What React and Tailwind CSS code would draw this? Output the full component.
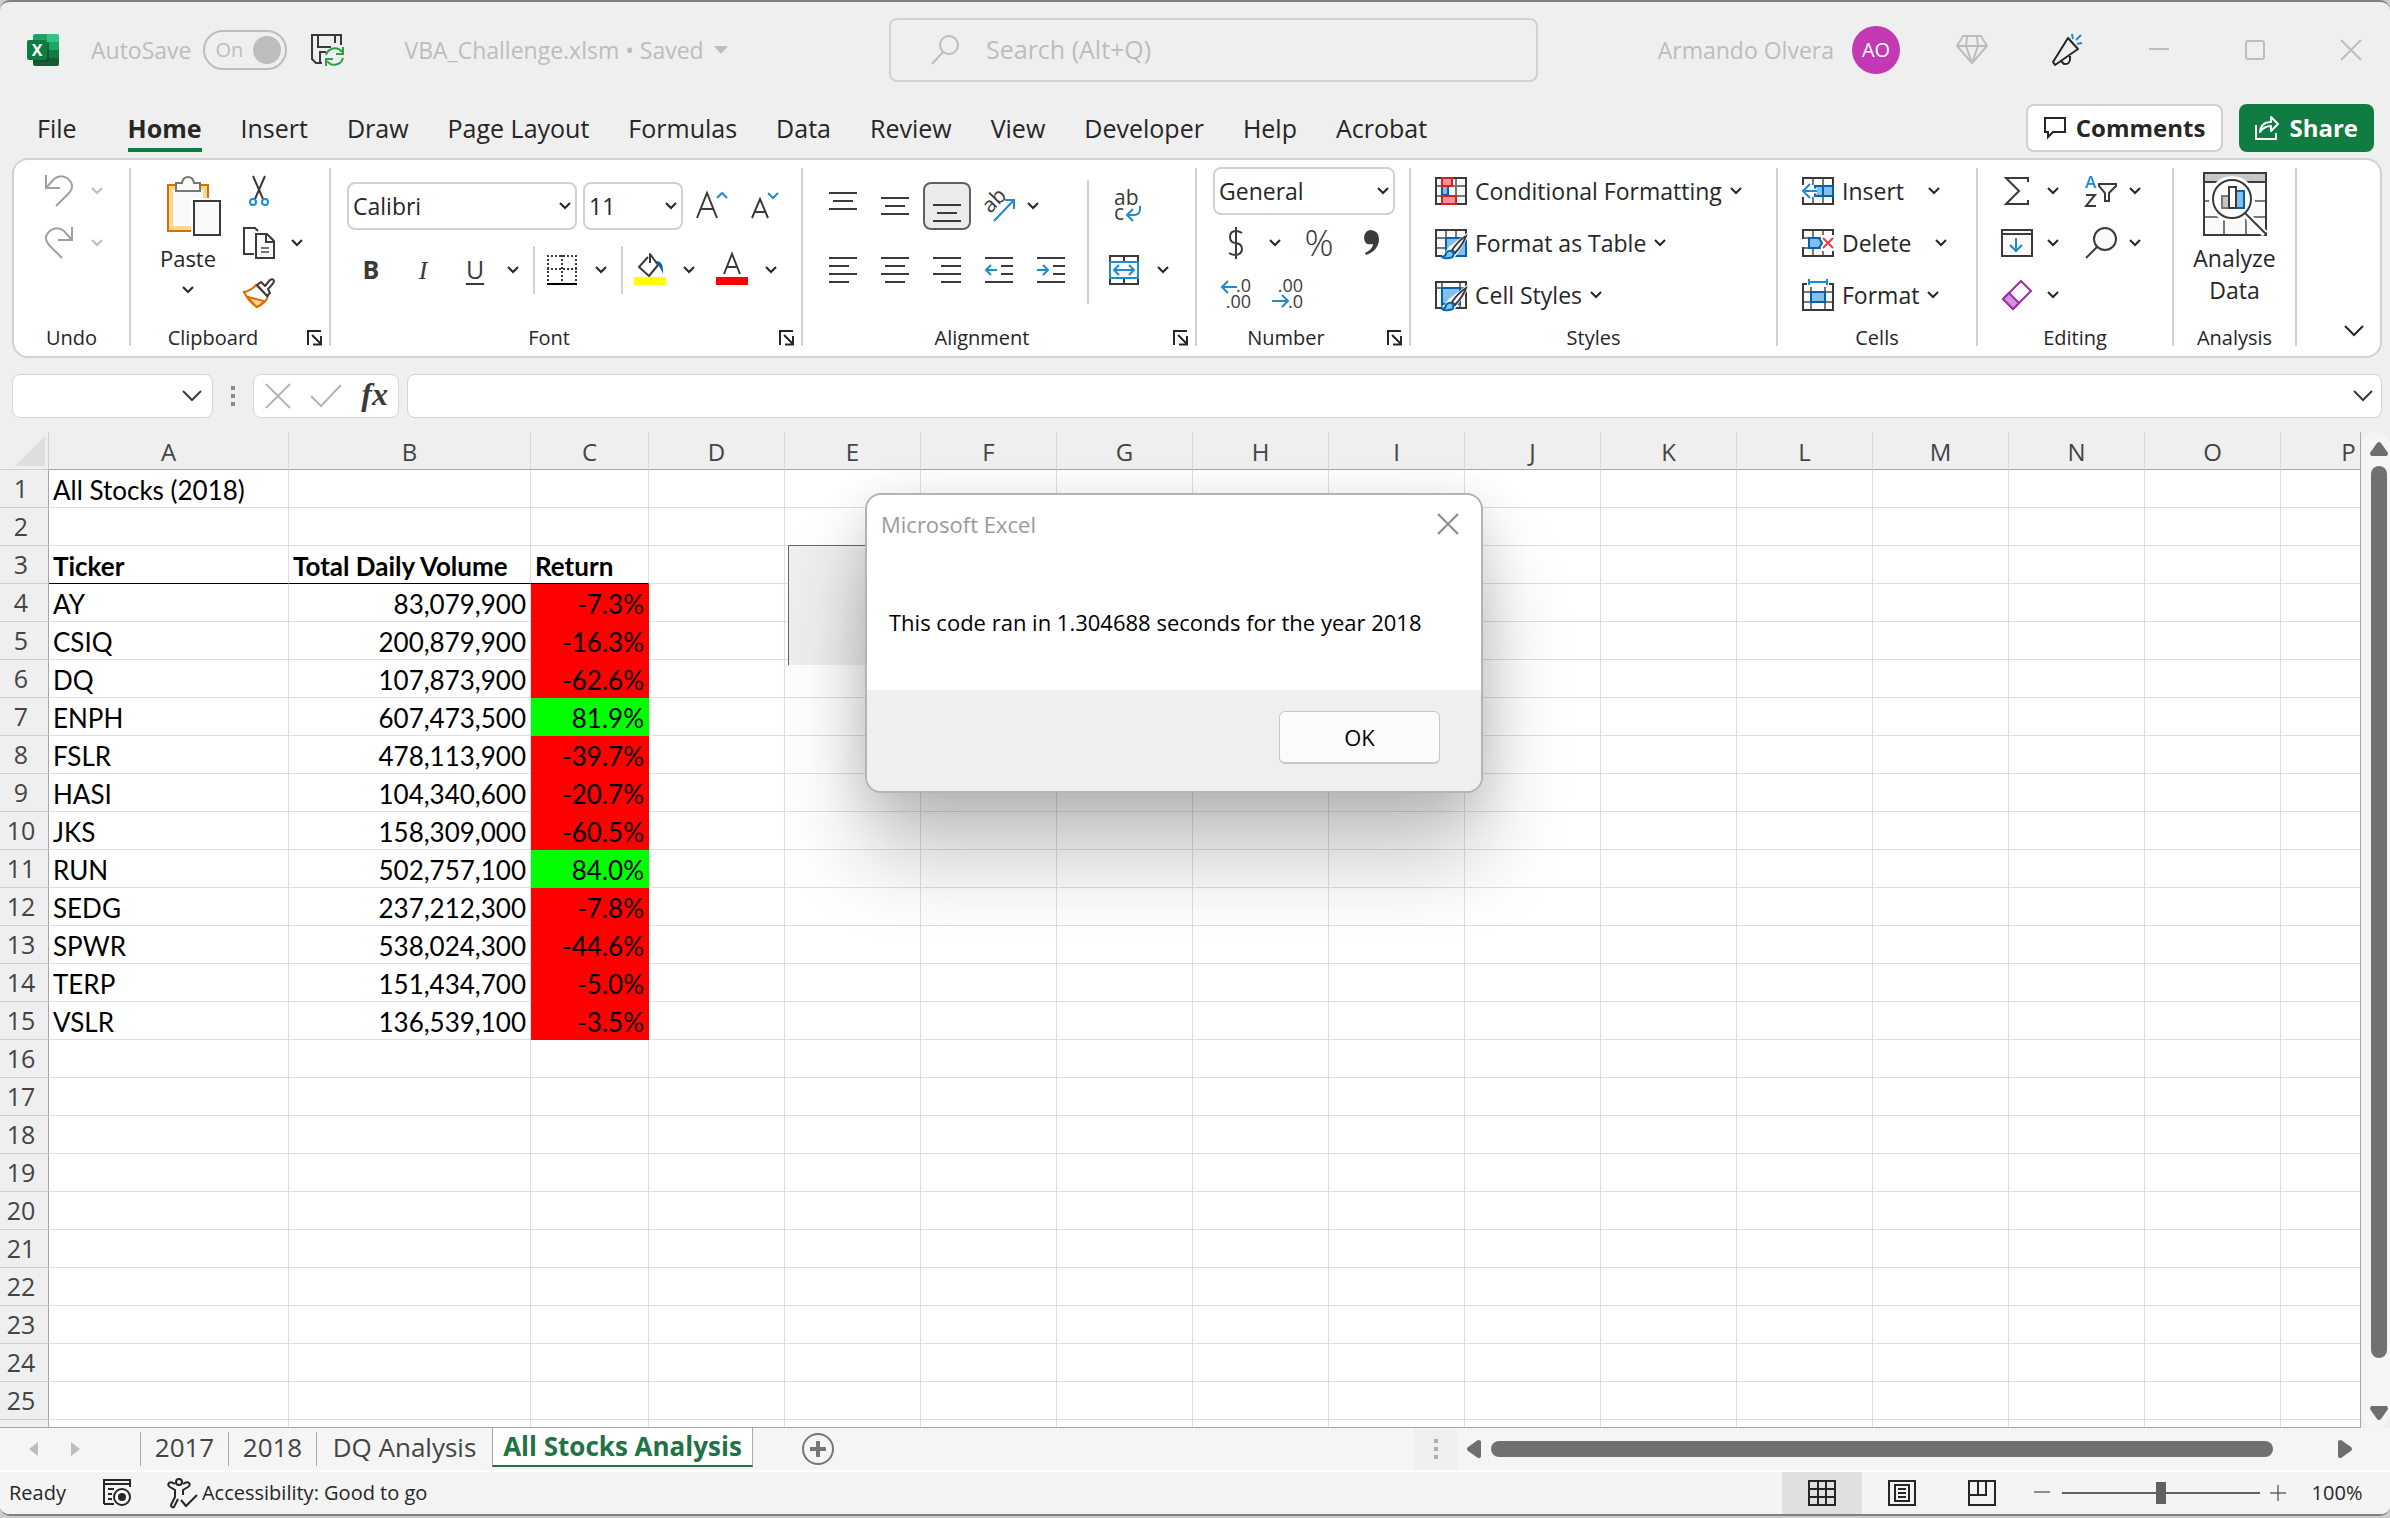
import React from "react";

const tabs = ["File", "Home", "Insert", "Draw", "Page Layout", "Formulas", "Data", "Review", "View", "Developer", "Help", "Acrobat"];

const columns = ["A", "B", "C", "D", "E", "F", "G", "H", "I", "J", "K", "L", "M", "N", "O", "P"];

const stocks = [
  ["AY", "83,079,900", "-7.3%"],
  ["CSIQ", "200,879,900", "-16.3%"],
  ["DQ", "107,873,900", "-62.6%"],
  ["ENPH", "607,473,500", "81.9%"],
  ["FSLR", "478,113,900", "-39.7%"],
  ["HASI", "104,340,600", "-20.7%"],
  ["JKS", "158,309,000", "-60.5%"],
  ["RUN", "502,757,100", "84.0%"],
  ["SEDG", "237,212,300", "-7.8%"],
  ["SPWR", "538,024,300", "-44.6%"],
  ["TERP", "151,434,700", "-5.0%"],
  ["VSLR", "136,539,100", "-3.5%"],
];

const INK = "#3b3a39";
const BLUE = "#1e8bcd";

function Chevron({ color = "#262626", wide = false }) {
  return wide ? (
    <svg width="20" height="12" viewBox="0 0 20 12" fill="none" stroke={color} strokeWidth="2">
      <path d="M1 1l9 9 9-9" />
    </svg>
  ) : (
    <svg width="12" height="8" viewBox="0 0 12 8" fill="none" stroke={color} strokeWidth="2" className="shrink-0">
      <path d="M1 1l5 5 5-5" />
    </svg>
  );
}

function Tool({ label, className = "w-[52px]", children, pressed }) {
  return (
    <button type="button" aria-label={label} aria-pressed={pressed} className={`flex h-12 shrink-0 items-center justify-center ${className}`}>
      {children}
    </button>
  );
}

function Icon({ w = 32, h = 32, className = "", children }) {
  return (
    <svg width={w} height={h} viewBox={`0 0 ${w} ${h}`} fill="none" className={`shrink-0 overflow-visible ${className}`}>
      {children}
    </svg>
  );
}

function Launcher({ label }) {
  return (
    <button type="button" aria-label={label} className="mr-1.5 flex w-7 items-center justify-end">
      <Icon w={16} h={16}>
        <path d="M1 15V1h13M5 5l9 9M14 6v8.500H6" stroke="#262626" strokeWidth="2" />
      </Icon>
    </button>
  );
}

function Group({ title, launcher, className, children }) {
  return (
    <>
      <section aria-label={title} className={`flex shrink-0 flex-col ${className}`}>
        <div className="flex-1">{children}</div>
        <div className="flex h-[34px] items-center pb-0.5">
          <span className="flex-1 text-center text-[20px] leading-none text-[#262626]">{title}</span>
          {launcher && <Launcher label={`${title} settings`} />}
        </div>
      </section>
      <div className="mt-2 mb-2.5 w-0.5 shrink-0 bg-[#d1d1d1]" />
    </>
  );
}

function Combo({ label, value, className }) {
  return (
    <div className={`relative shrink-0 ${className}`}>
      <select aria-label={label} className="h-12 w-full appearance-none rounded-lg border-2 border-[#d1d1d1] bg-white pl-1 text-[23px] text-[#262626]">
        <option>{value}</option>
      </select>
      <span className="pointer-events-none absolute inset-y-0 right-1.5 flex items-center">
        <Chevron />
      </span>
    </div>
  );
}

function Lines({ rows }) {
  return (
    <>
      {rows.map(([x1, x2, y]) => (
        <path key={y} d={`M${x1} ${y}H${x2}`} stroke={INK} strokeWidth="2" />
      ))}
    </>
  );
}

function ExcelLogo() {
  return (
    <Icon>
      <path d="M6 2q0-2 2-2h12v8H6z" fill="#21a366" />
      <path d="M20 0h10q2 0 2 2v6H20z" fill="#33c481" />
      <path d="M6 8h14v8H6z" fill="#107c41" />
      <path d="M20 8h12v8H20z" fill="#21a366" />
      <path d="M6 16h14v8H6z" fill="#185c37" />
      <path d="M20 16h12v8H20z" fill="#107c41" />
      <path d="M6 24h26v6q0 2-2 2H8q-2 0-2-2z" fill="#185c37" />
      <path d="M6 8h14q2 0 2 2v16q0 2-2 2H6z" fill="#0b4426" opacity=".6" />
      <rect y="6" width="20" height="20" rx="2" fill="#107c41" />
      <text x="10" y="22" textAnchor="middle" fontSize="16" fontWeight="700" fill="#fff" fontFamily="Open Sans">X</text>
    </Icon>
  );
}

function SaveIcon() {
  return (
    <Icon w={34} h={34}>
      <path d="M30 12V2H1v24l4 4h6" stroke={INK} strokeWidth="2" />
      <path d="M7 2v12h13M24 2v8M9 29V19h6" stroke={INK} strokeWidth="2" />
      <path d="M15 22a9 9 0 0 1 16-3M32 14v7h-7M32 25a9 9 0 0 1-16 3M15 33v-7h7" stroke="#2f9e44" strokeWidth="2" />
    </Icon>
  );
}

function TitleBar() {
  return (
    <header className="flex h-24 shrink-0 items-center text-[#bdbdbd]">
      <div className="flex w-[889px] shrink-0 items-center pl-[27px]">
        <ExcelLogo />
        <label className="ml-8 flex items-center gap-3 text-[23px]">
          AutoSave
          <input type="checkbox" role="switch" defaultChecked className="peer sr-only" />
          <span className="flex h-10 w-[84px] items-center justify-between rounded-full border-2 border-[#bdbdbd] pr-1 pl-2.5 text-[20px]">
            On
            <span className="h-7 w-7 rounded-full bg-[#bdbdbd]" />
          </span>
        </label>
        <button type="button" aria-label="Save" className="ml-6">
          <SaveIcon />
        </button>
        <button type="button" className="ml-[59px] flex items-center gap-2.5 text-[23px]">
          VBA_Challenge.xlsm • Saved
          <svg width="14" height="8" viewBox="0 0 14 8" fill="#bdbdbd">
            <path d="M0 0h14L7 8z" />
          </svg>
        </button>
      </div>
      <label className="flex h-16 min-w-0 flex-1 items-center rounded-lg border-2 border-[#d2d2d2] pl-10">
        <Icon w={28} h={30}>
          <circle cx="18" cy="10" r="9" stroke="#bdbdbd" strokeWidth="2" />
          <path d="M12 17L1 29" stroke="#bdbdbd" strokeWidth="2" />
        </Icon>
        <input type="search" aria-label="Search" placeholder="Search (Alt+Q)" className="ml-[27px] min-w-0 flex-1 bg-transparent text-[25px] outline-none placeholder:text-[#bdbdbd]" />
      </label>
      <div className="ml-[120px] flex shrink-0 items-center pr-[29px]">
        <span className="text-[23px]">Armando Olvera</span>
        <span className="ml-4.5 flex h-12 w-12 items-center justify-center rounded-full bg-[#c239b3] text-[20px] text-white">AO</span>
        <button type="button" aria-label="Premium" className="ml-14">
          <Icon h={30}>
            <path d="M7 1h18l6 10-15 17L1 11zM1 11h30M11 1l-1 10 6 17 6-17-1-10" stroke="#bdbdbd" strokeWidth="2" strokeLinejoin="round" />
          </Icon>
        </button>
        <button type="button" aria-label="What's new" className="ml-[62px]">
          <Icon h={34}>
            <path d="M18 5L3 29l2 3 23-16z" stroke="#262626" strokeWidth="2" strokeLinejoin="round" />
            <path d="M11 28l3 3q7 1 6-8" stroke="#262626" strokeWidth="2" />
            <path d="M22 1l1 5M31 2l-5 5M27 11l5-1" stroke={BLUE} strokeWidth="2" />
          </Icon>
        </button>
        <button type="button" aria-label="Minimize" className="ml-[67px]">
          <Icon w={20} h={20}><path d="M0 9h20" stroke="#bdbdbd" strokeWidth="2" /></Icon>
        </button>
        <button type="button" aria-label="Maximize" className="ml-[76px]">
          <Icon w={20} h={20}><rect x="1" y="1" width="18" height="18" rx="2" stroke="#bdbdbd" strokeWidth="2" /></Icon>
        </button>
        <button type="button" aria-label="Close" className="ml-[76px]">
          <Icon w={20} h={20}><path d="M0 0l20 20M20 0L0 20" stroke="#bdbdbd" strokeWidth="2" /></Icon>
        </button>
      </div>
    </header>
  );
}

function TabRow() {
  return (
    <nav className="flex h-[60px] shrink-0 items-start pt-1.5 pr-4 pl-[37px]">
      <div className="flex flex-1 gap-[39px]">
        {tabs.map((tab) =>
          tab === "Home" ? (
            <button key={tab} type="button" className="ml-3 h-12 border-b-4 border-[#107c41] pt-1.5 text-[25px] font-bold text-[#262626]">{tab}</button>
          ) : (
            <button key={tab} type="button" className="h-12 pt-1.5 pb-1 text-[25px] text-[#262626]">{tab}</button>
          )
        )}
      </div>
      <button type="button" className="flex h-12 items-center gap-2.5 rounded-lg border-2 border-[#d1d1d1] bg-white px-4 text-[24px] font-bold text-[#262626]">
        <Icon w={22} h={22}>
          <path d="M1 1h20v14H9l-5 5v-5H1z" stroke="#262626" strokeWidth="2" />
        </Icon>
        Comments
      </button>
      <button type="button" className="ml-4 flex h-12 items-center gap-2.5 rounded-lg bg-[#107c41] px-4 text-[24px] font-bold text-white">
        <Icon w={24} h={24}>
          <path d="M1 9v14h20v-6" stroke="#fff" strokeWidth="2" />
          <path d="M5 16q1-10 11-10V1l7 7-7 7v-5q-7 0-11 6z" stroke="#fff" strokeWidth="2" strokeLinejoin="round" />
        </Icon>
        Share
      </button>
    </nav>
  );
}

function UndoIcon() {
  return (
    <Icon w={30} h={34}>
      <path d="M2 1v13h14M2 14L10 5q6-5 13-1 9 7 2 15L12 32" stroke="#a0a0a0" strokeWidth="2" />
    </Icon>
  );
}

function RedoIcon() {
  return (
    <Icon w={30} h={34}>
      <path d="M28 1v13H14M28 14L20 5q-6-5-13-1-9 7-2 15l13 13" stroke="#a0a0a0" strokeWidth="2" />
    </Icon>
  );
}

function PasteIcon() {
  return (
    <Icon w={54} h={60} className="ml-3">
      <path d="M1 9h40v46H1z" fill="#fafafa" stroke="#e06c00" strokeWidth="2" />
      <path d="M4 12h34v40H4z" stroke="#f9d98f" strokeWidth="4" />
      <path d="M9 15V7h6q1-6 6-6t6 6h6v8z" fill="#fafafa" stroke="#797774" strokeWidth="2" />
      <path d="M24 22h30v38H24z" fill="#fff" />
      <path d="M27 25h26v34H27z" fill="#fafafa" stroke={INK} strokeWidth="2" />
    </Icon>
  );
}

function CutIcon() {
  return (
    <Icon w={20} h={32}>
      <path d="M4 1l10 23M16 1L6 24" stroke={INK} strokeWidth="2" />
      <circle cx="4" cy="27" r="3" stroke={BLUE} strokeWidth="2" />
      <circle cx="16" cy="27" r="3" stroke={BLUE} strokeWidth="2" />
    </Icon>
  );
}

function CopyIcon() {
  return (
    <Icon>
      <path d="M15 4l-3-3H1v26h10" stroke={INK} strokeWidth="2" />
      <path d="M13 7h11l7 7v17H13z" fill="#fafafa" stroke={INK} strokeWidth="2" />
      <path d="M23 7v8h8" stroke={INK} strokeWidth="2" />
      <path d="M18 21h8M18 25h8" stroke="#797774" strokeWidth="2" />
    </Icon>
  );
}

function PainterIcon() {
  return (
    <Icon h={30}>
      <path d="M13 7Q8 13 1 14q5 10 13 15 9-4 11-11z" fill="#fff" stroke="#e06c00" strokeWidth="2" />
      <path d="M5 19l16 4q-3 4-7 6-5-4-9-10z" fill="#f9d98f" stroke="#e06c00" strokeWidth="2" />
      <path d="M14 7l4-3 4 4 5-6q3-2 4 1 0 2-6 8l2 4-3 3z" fill="#fff" stroke={INK} strokeWidth="2" strokeLinejoin="round" />
    </Icon>
  );
}

function GridIcon({ children }) {
  return (
    <Icon>
      <path d="M1 3h30v26H1z" fill="#fafafa" />
      <path d="M11 3v26M21 3v26M1 11h30M1 21h30" stroke="#797774" strokeWidth="2" />
      <path d="M1 3h30v26H1z" stroke={INK} strokeWidth="2" />
      {children}
    </Icon>
  );
}

function BrushOverlay() {
  return (
    <>
      <path d="M32 6v6L20 30H6l8-10z" fill="#fff" />
      <path d="M31 9q-7 4-14 14l3 3Q29 16 31 9z" fill="#fff" stroke={INK} strokeWidth="2" />
      <path d="M7 30q4-1 4-4 3-4 7-1 2 6-4 6-4 1-7-1z" fill="#83beec" stroke="#0063b1" strokeWidth="2" />
    </>
  );
}

function ArrowPath({ d }) {
  return <path d={d} stroke={BLUE} strokeWidth="2" />;
}

function StyleItem({ icon, text, far }) {
  return (
    <button type="button" className="flex h-[52px] items-center text-[23px] text-[#262626]">
      {icon}
      <span className="mr-2 ml-2 whitespace-nowrap">{text}</span>
      <span className={far ? "ml-4" : ""}>
        <Chevron />
      </span>
    </button>
  );
}

function Ribbon() {
  const light = "#bdbdbd";
  return (
    <div className="mr-2 ml-3 flex h-[200px] shrink-0 overflow-hidden rounded-2xl border-2 border-[#d1d1d1] bg-white">
      <Group title="Undo" className="w-[115px] pt-[5px]">
        <div className="flex h-[52px] items-center pl-5">
          <Tool label="Undo" className="w-[50px]"><UndoIcon /></Tool>
          <Tool label="Undo list" className="w-[26px]"><Chevron color={light} /></Tool>
        </div>
        <div className="flex h-[52px] items-center pl-5">
          <Tool label="Redo" className="w-[50px]"><RedoIcon /></Tool>
          <Tool label="Redo list" className="w-[26px]"><Chevron color={light} /></Tool>
        </div>
      </Group>

      <Group title="Clipboard" launcher className="w-[198px] pt-[5px]">
        <div className="flex pl-[22px]">
          <button type="button" className="flex w-[70px] flex-col items-center pt-[11px] text-[22px] text-[#262626]">
            <PasteIcon />
            <span className="mt-1.5 mb-3 leading-8">Paste</span>
            <Chevron />
          </button>
          <div className="ml-3">
            <div className="flex h-[52px] items-center">
              <Tool label="Cut" className="w-12"><CutIcon /></Tool>
            </div>
            <div className="flex h-[52px] items-center">
              <Tool label="Copy" className="w-12"><CopyIcon /></Tool>
              <Tool label="Copy options" className="w-7"><Chevron /></Tool>
            </div>
            <div className="flex h-12 items-center">
              <Tool label="Format Painter" className="w-12"><PainterIcon /></Tool>
            </div>
          </div>
        </div>
      </Group>

      <Group title="Font" launcher className="w-[470px] pt-[14px]">
        <div className="flex h-16 items-center pl-4">
          <Combo label="Font name" value="Calibri" className="w-[230px]" />
          <Combo label="Font size" value="11" className="ml-1.5 w-[100px]" />
          <Tool label="Increase Font Size" className="ml-1 w-[50px]">
            <Icon w={32} h={32}>
              <path d="M1 28L11 3l10 25M5 19h12" stroke={INK} strokeWidth="2" />
              <path d="M21 8l5-5 5 5" stroke={BLUE} strokeWidth="2" />
            </Icon>
          </Tool>
          <Tool label="Decrease Font Size" className="w-14">
            <Icon w={28} h={32}>
              <path d="M1 28L9 9l8 19M4 22h10" stroke={INK} strokeWidth="2" />
              <path d="M17 3l5 5 5-5" stroke={BLUE} strokeWidth="2" />
            </Icon>
          </Tool>
        </div>
        <div className="flex h-16 items-center pl-[14px] text-[25px] text-[#3b3a39]">
          <Tool label="Bold"><b>B</b></Tool>
          <Tool label="Italic"><i className="font-['Liberation_Serif',serif] text-[26px]">I</i></Tool>
          <Tool label="Underline"><u className="underline-offset-4">U</u></Tool>
          <Tool label="Underline options" className="w-6"><Chevron /></Tool>
          <div className="mx-2 h-12 w-0.5 bg-[#d1d1d1]" />
          <Tool label="Borders" className="w-[38px]">
            <Icon w={30} h={30}>
              <path d="M1 0v28M29 0v28M15 0v28M0 1h30M0 14h30" stroke={INK} strokeWidth="2" strokeDasharray="2 2" />
              <path d="M0 29h30" stroke="#000" strokeWidth="2" />
            </Icon>
          </Tool>
          <Tool label="Border options" className="w-10"><Chevron /></Tool>
          <div className="h-12 w-0.5 bg-[#d1d1d1]" />
          <Tool label="Fill Color" className="w-[54px]">
            <Icon h={34}>
              <path d="M14 4L5 14l10 9 9-11L16 1v9" stroke={INK} strokeWidth="2" strokeLinejoin="round" />
              <path d="M21 8q9-1 8 13-2-6-8-13z" fill="#0063b1" />
              <path d="M0 24h32v8H0z" fill="#ffff00" />
            </Icon>
          </Tool>
          <Tool label="Fill Color options" className="w-6"><Chevron /></Tool>
          <Tool label="Font Color" className="w-[62px]">
            <Icon h={34}>
              <path d="M8 21L16 1l8 20M11 14h10" stroke={INK} strokeWidth="2" />
              <path d="M0 24h32v8H0z" fill="#ff0000" />
            </Icon>
          </Tool>
          <Tool label="Font Color options" className="w-4"><Chevron /></Tool>
        </div>
      </Group>

      <Group title="Alignment" launcher className="w-[392px] pt-[14px]">
        <div className="flex pl-[14px]">
          <div className="w-[270px]">
            <div className="flex h-16 items-center">
              <Tool label="Top Align"><Icon w={28}><Lines rows={[[0, 28, 3], [4, 24, 11], [0, 28, 19]]} /></Icon></Tool>
              <Tool label="Middle Align"><Icon w={28}><Lines rows={[[0, 28, 8], [4, 24, 16], [0, 28, 24]]} /></Icon></Tool>
              <Tool label="Bottom Align" pressed className="mx-0.5 w-12 rounded-lg border-2 border-[#616161] bg-[#ebebeb]">
                <Icon w={28}><Lines rows={[[0, 28, 15], [4, 24, 23], [0, 28, 31]]} /></Icon>
              </Tool>
              <Tool label="Orientation">
                <Icon w={32} h={34}>
                  <text x="4" y="23" fontSize="21" fill={INK} transform="rotate(-45 8 20)" fontFamily="Open Sans">ab</text>
                  <path d="M11 32L31 11M22 11h9v9" stroke={BLUE} strokeWidth="2" />
                </Icon>
              </Tool>
              <Tool label="Orientation options" className="w-4"><Chevron /></Tool>
            </div>
            <div className="flex h-16 items-center">
              <Tool label="Align Left"><Icon w={28} h={28}><Lines rows={[[0, 28, 2], [0, 20, 10], [0, 28, 18], [0, 20, 26]]} /></Icon></Tool>
              <Tool label="Center"><Icon w={28} h={28}><Lines rows={[[0, 28, 2], [4, 24, 10], [0, 28, 18], [4, 24, 26]]} /></Icon></Tool>
              <Tool label="Align Right"><Icon w={28} h={28}><Lines rows={[[0, 28, 2], [8, 28, 10], [0, 28, 18], [8, 28, 26]]} /></Icon></Tool>
              <Tool label="Decrease Indent">
                <Icon w={28} h={28}>
                  <Lines rows={[[0, 28, 2], [16, 28, 10], [16, 28, 18], [0, 28, 26]]} />
                  <ArrowPath d="M12 14H1M6 9l-5 5 5 5" />
                </Icon>
              </Tool>
              <Tool label="Increase Indent">
                <Icon w={28} h={28}>
                  <Lines rows={[[0, 28, 2], [16, 28, 10], [16, 28, 18], [0, 28, 26]]} />
                  <ArrowPath d="M0 14h11M6 9l5 5-5 5" />
                </Icon>
              </Tool>
            </div>
          </div>
          <div className="mt-1.5 h-[124px] w-0.5 bg-[#d1d1d1]" />
          <div className="pl-[14px]">
            <div className="flex h-16 items-center">
              <Tool label="Wrap Text" className="w-[50px]">
                <Icon w={28} h={34}>
                  <text x="0" y="16" fontSize="21" fill={INK} fontFamily="Open Sans">ab</text>
                  <text x="0" y="31" fontSize="21" fill={INK} fontFamily="Open Sans">c</text>
                  <ArrowPath d="M26 17q1 9-6 9h-7M19 20l-6 6 6 6" />
                </Icon>
              </Tool>
            </div>
            <div className="flex h-16 items-center">
              <Tool label="Merge and Center" className="w-[42px]">
                <Icon w={30} h={30}>
                  <path d="M1 1h28v28H1zM15 1v28" stroke={INK} strokeWidth="2" />
                  <path d="M1 7h28v16H1z" fill="#fafafa" stroke={BLUE} strokeWidth="2" />
                  <ArrowPath d="M5 15h20M10 10l-5 5 5 5M20 10l5 5-5 5" />
                </Icon>
              </Tool>
              <Tool label="Merge options" className="w-9"><Chevron /></Tool>
            </div>
          </div>
        </div>
      </Group>

      <Group title="Number" launcher className="w-[212px] pt-[5px]">
        <div className="flex h-[52px] items-center pl-4">
          <Combo label="Number format" value="General" className="w-[182px]" />
        </div>
        <div className="flex h-[52px] items-center pl-[14px] text-[#3b3a39]">
          <Tool label="Accounting Format" className="w-[50px]">
            <Icon w={16} h={32}>
              <path d="M14 6q-3-2-6-2-6 0-6 6t6 6q6 1 6 6t-6 6q-4 0-7-2M8 0v32" stroke={INK} strokeWidth="2" />
            </Icon>
          </Tool>
          <Tool label="Accounting options" className="w-7"><Chevron /></Tool>
          <Tool label="Percent Style" className="w-[60px] text-[36px] font-light">%</Tool>
          <Tool label="Comma Style" className="w-[46px]">
            <Icon w={16} h={26}>
              <path d="M7 0q8 1 8 9 0 11-13 16l-1-2q8-4 8-9-9 2-9-7 1-7 7-7z" fill={INK} />
            </Icon>
          </Tool>
        </div>
        <div className="flex h-12 items-center pl-[14px]">
          <Tool label="Increase Decimal" className="w-[50px]">
            <Icon h={34}>
              <text x="31" y="16" textAnchor="end" fontSize="18" fill={INK} fontFamily="Open Sans">.0</text>
              <text x="31" y="32" textAnchor="end" fontSize="18" fill={INK} fontFamily="Open Sans">.00</text>
              <ArrowPath d="M17 11H2M8 5l-6 6 6 6" />
            </Icon>
          </Tool>
          <Tool label="Decrease Decimal" className="w-[54px]">
            <Icon h={34}>
              <text x="31" y="16" textAnchor="end" fontSize="18" fill={INK} fontFamily="Open Sans">.00</text>
              <text x="31" y="32" textAnchor="end" fontSize="18" fill={INK} fontFamily="Open Sans">.0</text>
              <ArrowPath d="M0 25h16M10 19l6 6-6 6" />
            </Icon>
          </Tool>
        </div>
      </Group>

      <Group title="Styles" className="w-[365px] pt-[5px]">
        <div className="pl-6">
          <StyleItem
            text="Conditional Formatting"
            icon={
              <GridIcon>
                <path d="M7 11h6v9H7z" fill="#83beec" stroke="#0063b1" strokeWidth="2" />
                <path d="M7 3h10v8H7zM7 21h14v8H7z" fill="#ff9195" stroke="#d92121" strokeWidth="2" />
              </GridIcon>
            }
          />
          <StyleItem
            text="Format as Table"
            icon={
              <GridIcon>
                <path d="M11 11h20v18H11z" fill="#83beec" stroke="#0063b1" strokeWidth="2" />
                <BrushOverlay />
              </GridIcon>
            }
          />
          <StyleItem
            text="Cell Styles"
            icon={
              <Icon>
                <path d="M1 3h30v26H1z" fill="#fafafa" />
                <path d="M7 3v26M25 3v26M1 9h30" stroke="#797774" strokeWidth="2" />
                <path d="M1 3h30v26H1z" stroke={INK} strokeWidth="2" />
                <path d="M7 9h18v16H7z" fill="#83beec" stroke="#0063b1" strokeWidth="2" />
                <BrushOverlay />
              </Icon>
            }
          />
        </div>
      </Group>

      <Group title="Cells" className="w-[198px] pt-[5px]">
        <div className="pl-6">
          <StyleItem
            text="Insert"
            far
            icon={
              <GridIcon>
                <path d="M0 10h18v12H0z" fill="#fff" />
                <path d="M13 11h18v10H13z" fill="#83beec" stroke="#0063b1" strokeWidth="2" />
                <path d="M21 11v10" stroke="#0063b1" strokeWidth="2" />
                <path d="M15 16H1M8 9l-7 7 7 7" stroke="#fff" strokeWidth="5" />
                <ArrowPath d="M15 16H1M8 9l-7 7 7 7" />
              </GridIcon>
            }
          />
          <StyleItem
            text="Delete"
            far
            icon={
              <GridIcon>
                <path d="M0 12h7v8H0zM19 8h13v16H19z" fill="#fff" />
                <path d="M7 11h10l3 5-3 5H7z" fill="#83beec" stroke="#0063b1" strokeWidth="2" />
                <path d="M21 11l10 10M31 11L21 21" stroke="#e83c3c" strokeWidth="2" />
              </GridIcon>
            }
          />
          <StyleItem
            text="Format"
            icon={
              <Icon>
                <path d="M1 5h30v26H1z" fill="#fafafa" />
                <path d="M9 8v22M23 8v22M1 13h30M1 23h30" stroke="#797774" strokeWidth="2" />
                <path d="M5 5H1v26h30V5h-4" stroke={INK} strokeWidth="2" />
                <path d="M9 13h14v10H9z" fill="#83beec" stroke="#0063b1" strokeWidth="2" />
                <path d="M7 3h18M7 0v6M25 0v6" stroke={BLUE} strokeWidth="2" />
              </Icon>
            }
          />
        </div>
      </Group>

      <Group title="Editing" className="w-[194px] pt-[5px]">
        <div className="flex h-[52px] items-center pl-3">
          <Tool label="AutoSum" className="w-[54px]">
            <Icon w={26} h={28}>
              <path d="M24 5V1H2l13 13L2 27h22v-4" stroke={INK} strokeWidth="2" />
            </Icon>
          </Tool>
          <Tool label="AutoSum options" className="w-[18px]"><Chevron /></Tool>
          <Tool label="Sort and Filter" className="ml-[13px] w-[52px]">
            <Icon>
              <text x="0" y="13" fontSize="17" fontWeight="600" fill={BLUE} fontFamily="Open Sans">A</text>
              <path d="M1 20h9L1 31h10" stroke={INK} strokeWidth="2" />
              <path d="M14 9h17v2l-7 7v8h-4v-8l-6-7z" stroke={INK} strokeWidth="2" />
            </Icon>
          </Tool>
          <Tool label="Sort and Filter options" className="w-4"><Chevron /></Tool>
        </div>
        <div className="flex h-[52px] items-center pl-3">
          <Tool label="Fill" className="w-[54px]">
            <Icon h={28}>
              <path d="M1 1h30v26H1zM1 5h30" fill="#fafafa" stroke={INK} strokeWidth="2" />
              <ArrowPath d="M15 9v14M9 16l6 6 6-6" />
            </Icon>
          </Tool>
          <Tool label="Fill options" className="w-[18px]"><Chevron /></Tool>
          <Tool label="Find and Select" className="ml-[13px] w-[52px]">
            <Icon>
              <circle cx="20" cy="12" r="11" fill="#fafafa" stroke={INK} strokeWidth="2" />
              <path d="M12 20L1 31" stroke={INK} strokeWidth="2" />
            </Icon>
          </Tool>
          <Tool label="Find and Select options" className="w-4"><Chevron /></Tool>
        </div>
        <div className="flex h-[52px] items-center pl-3">
          <Tool label="Clear" className="w-[54px]">
            <Icon>
              <path d="M20 2l10 10-18 18L2 20z" fill="#fafafa" stroke="#9a2fa3" strokeWidth="2" />
              <path d="M8 14l10 10-6 6L2 20z" fill="#d692dc" stroke="#9a2fa3" strokeWidth="2" />
            </Icon>
          </Tool>
          <Tool label="Clear options" className="w-[18px]"><Chevron /></Tool>
        </div>
      </Group>

      <Group title="Analysis" className="w-[121px] pt-3">
        <button type="button" className="flex w-full flex-col items-center text-[23px] leading-8 text-[#262626]">
          <Icon w={64} h={64}>
            <path d="M1 1h62v62H1z" fill="#fafafa" />
            <path d="M1 1h62v9H1z" fill="#c8c6c4" />
            <path d="M1 29h62M1 45h62M21 45v18M43 45v18" stroke="#797774" strokeWidth="2" />
            <path d="M1 1h62v62H1zM1 10h62" stroke={INK} strokeWidth="2" />
            <circle cx="29" cy="27" r="23" fill="#fff" />
            <path d="M42 41l20 21" stroke="#fff" strokeWidth="7" />
            <circle cx="29" cy="27" r="19" fill="#fff" stroke={INK} strokeWidth="2" />
            <path d="M19 24h8v12h-8z" fill="#c8c6c4" stroke="#797774" strokeWidth="2" />
            <path d="M33 19h8v17h-8z" fill="#83beec" stroke="#0063b1" strokeWidth="2" />
            <path d="M26 15h7v21h-7z" fill="#fff" stroke={INK} strokeWidth="2" />
            <path d="M42 41l21 21" stroke={INK} strokeWidth="2" />
          </Icon>
          <span className="mt-1.5">Analyze</span>
          <span>Data</span>
        </button>
      </Group>

      <div className="flex flex-1 items-end justify-end pr-4 pb-[19px]">
        <button type="button" aria-label="Ribbon display options"><Chevron wide /></button>
      </div>
    </div>
  );
}

function FormulaBar() {
  return (
    <div className="flex h-[74px] shrink-0 items-start pt-4 pr-2 pl-3">
      <div className="flex h-11 w-[201px] shrink-0 items-center rounded-lg border border-[#d4d4d4] bg-white pr-2.5">
        <input aria-label="Name box" className="min-w-0 flex-1 bg-transparent px-2 text-[23px] outline-none" />
        <button type="button" aria-label="Name list"><Chevron wide color="#3b3a39" /></button>
      </div>
      <div className="flex h-11 w-10 shrink-0 flex-col items-center justify-center gap-1">
        <span className="h-1 w-1 bg-[#8a8a8a]" />
        <span className="h-1 w-1 bg-[#8a8a8a]" />
        <span className="h-1 w-1 bg-[#8a8a8a]" />
      </div>
      <div className="flex h-11 w-[146px] shrink-0 items-center justify-between rounded-lg border border-[#d4d4d4] bg-white pr-2.5 pl-3">
        <button type="button" aria-label="Cancel">
          <Icon w={24} h={24}><path d="M0 0l24 24M24 0L0 24" stroke="#b5b5b5" strokeWidth="2" /></Icon>
        </button>
        <button type="button" aria-label="Enter">
          <Icon w={32} h={24}><path d="M1 12l10 10L31 1" stroke="#b5b5b5" strokeWidth="2" /></Icon>
        </button>
        <button type="button" aria-label="Insert Function" className="pb-1 font-['Liberation_Serif',serif] text-[32px] leading-none font-bold text-[#3b3a39] italic">fx</button>
      </div>
      <div className="ml-2 flex h-11 min-w-0 flex-1 items-center rounded-lg border border-[#d4d4d4] bg-white pr-2">
        <input aria-label="Formula bar" className="min-w-0 flex-1 bg-transparent px-2 text-[23px] outline-none" />
        <button type="button" aria-label="Expand formula bar"><Chevron wide color="#3b3a39" /></button>
      </div>
    </div>
  );
}

function cellFor(row, col) {
  const base = "h-[38px] overflow-visible border-r border-b p-0 pt-0.5 whitespace-nowrap ";
  const plain = base + "border-[#dfdfdf] px-1 ";
  if (col > 2) return { text: "", cls: plain };
  if (row === 1 && col === 0) return { text: "All Stocks (2018)", cls: plain };
  if (row === 3) {
    return { text: ["Ticker", "Total Daily Volume", "Return"][col], cls: plain + "border-b-black font-bold" };
  }
  const stock = stocks[row - 4];
  if (!stock) return { text: "", cls: plain };
  if (col === 0) return { text: stock[0], cls: plain };
  if (col === 1) return { text: stock[1], cls: plain + "text-right" };
  return {
    text: stock[2],
    cls: base + "pr-1 text-right " + (stock[2].startsWith("-") ? "border-[#ff0000] bg-[#ff0000]" : "border-[#00ff00] bg-[#00ff00]"),
  };
}

function Sheet() {
  const rows = Array.from({ length: 26 }, (_, i) => i + 1);
  return (
    <div className="flex min-h-0 flex-1">
      <div className="relative min-w-0 flex-1 overflow-hidden border-r border-b border-[#a6a6a6]">
        <table className="w-full table-fixed border-separate border-spacing-0 bg-white font-['Lato',sans-serif] text-[26px] leading-none text-black">
          <colgroup>
            <col className="w-[49px]" />
            <col className="w-[240px]" />
            <col className="w-[242px]" />
            <col className="w-[118px]" />
            {columns.slice(3).map((c) => (
              <col key={c} className="w-[136px]" />
            ))}
          </colgroup>
          <thead className="font-['Open_Sans',sans-serif] text-[24px] text-[#444]">
            <tr>
              <th className="h-[38px] border-r border-b border-r-[#d0d0d0] border-b-[#d0d0d0] bg-[#efefef] p-0">
                <svg width="30" height="30" viewBox="0 0 30 30" className="ml-auto mr-[3px]">
                  <path d="M30 0v30H0z" fill="#dedede" />
                </svg>
              </th>
              {columns.map((c) => (
                <th key={c} className="h-[38px] border-r border-b border-r-[#d8d8d8] border-b-[#a6a6a6] bg-[#efefef] p-0 pt-0.5 text-center font-normal">{c}</th>
              ))}
            </tr>
          </thead>
          <tbody>
            {rows.map((row) => (
              <tr key={row}>
                <th className="h-[38px] border-r border-b border-r-[#a6a6a6] border-b-[#d0d0d0] bg-[#efefef] p-0 pr-1.5 text-center font-['Open_Sans',sans-serif] text-[25px] font-normal text-[#444]">
                  {row < 26 ? row : ""}
                </th>
                {columns.map((c, i) => {
                  const cell = cellFor(row, i);
                  return (
                    <td key={c} className={cell.cls}>{cell.text}</td>
                  );
                })}
              </tr>
            ))}
          </tbody>
        </table>
        <div className="absolute top-[113px] left-[788px] h-[120px] w-[400px] border-t border-l border-[#666] bg-[#efefef]" />
      </div>
      <div className="flex w-[29px] shrink-0 flex-col items-center rounded-2xl bg-[#f5f5f5] pt-2.5 pb-2 pl-1.5">
        <svg width="18" height="14" viewBox="0 0 18 14" fill="#6e6e6e">
          <path d="M7 1q2-2 4 0l7 10q0 3-2 3H2q-2 0-2-3z" />
        </svg>
        <div className="mt-2.5 h-[892px] w-4 rounded-full bg-[#707070]" />
        <svg width="18" height="14" viewBox="0 0 18 14" fill="#6e6e6e" className="mt-auto">
          <path d="M7 13q2 2 4 0l7-10q0-3-2-3H2Q0 0 0 3z" />
        </svg>
      </div>
    </div>
  );
}

function SheetTabs() {
  return (
    <div className="flex h-[42px] shrink-0 items-stretch bg-[#f5f5f5] text-[26px] leading-none text-[#444]">
      <div className="flex w-[140px] items-center pl-[29px]">
        <button type="button" aria-label="Previous sheet">
          <svg width="9" height="14" viewBox="0 0 9 14" fill="#bdbdbd"><path d="M9 0v14L0 7z" /></svg>
        </button>
        <button type="button" aria-label="Next sheet" className="ml-[33px]">
          <svg width="9" height="14" viewBox="0 0 9 14" fill="#bdbdbd"><path d="M0 0v14l9-7z" /></svg>
        </button>
      </div>
      <button type="button" className="my-1 w-[88px] border-l border-[#ababab] pb-1">2017</button>
      <button type="button" className="my-1 w-[88px] border-l border-[#ababab] pb-1">2018</button>
      <button type="button" className="my-1 w-[176px] border-l border-[#ababab] pb-1">DQ Analysis</button>
      <button type="button" className="-mt-px mb-[3px] w-[261px] border-x border-b-2 border-x-[#ababab] border-b-[#217346] bg-white font-bold whitespace-nowrap text-[#217346]">All Stocks Analysis</button>
      <button type="button" aria-label="New sheet" className="ml-[49px]">
        <Icon w={32} h={32}>
          <circle cx="16" cy="16" r="15" stroke="#767676" strokeWidth="2" />
          <path d="M16 8v16M8 16h16" stroke="#767676" strokeWidth="4" />
        </Icon>
      </button>
      <div className="ml-auto flex w-[43px] shrink-0 flex-col items-center justify-center gap-1 bg-[#efefef]">
        <span className="h-1 w-1 bg-[#b0b0b0]" />
        <span className="h-1 w-1 bg-[#b0b0b0]" />
        <span className="h-1 w-1 bg-[#b0b0b0]" />
      </div>
      <div className="mr-7 flex w-[905px] shrink-0 items-center rounded-2xl px-2.5">
        <svg width="14" height="18" viewBox="0 0 14 18" fill="#6e6e6e">
          <path d="M1 7q-2 2 0 4l10 7q3 0 3-2V2q0-2-3-2z" />
        </svg>
        <div className="ml-2.5 h-4 w-[782px] rounded-full bg-[#707070]" />
        <svg width="14" height="18" viewBox="0 0 14 18" fill="#6e6e6e" className="ml-auto">
          <path d="M13 7q2 2 0 4L3 18q-3 0-3-2V2q0-2 3-2z" />
        </svg>
      </div>
    </div>
  );
}

function StatusBar() {
  return (
    <footer className="mt-0.5 flex h-[42px] shrink-0 items-center bg-[#f4f4f4] pl-[9px] text-[20px] text-[#262626]">
      <span>Ready</span>
      <button type="button" aria-label="Record macro" className="ml-[37px]">
        <Icon w={30} h={28}>
          <path d="M1 25V1h26v7M1 5h26M1 25h10M5 10h6M5 15h4M5 20h4" stroke="#262626" strokeWidth="2" />
          <circle cx="19" cy="18" r="8" fill="#fff" stroke="#262626" strokeWidth="2" />
          <circle cx="19" cy="18" r="4" fill="#262626" />
        </Icon>
      </button>
      <button type="button" className="ml-[33px] flex items-center gap-1">
        <Icon w={32} h={30}>
          <circle cx="13" cy="4" r="3" stroke="#262626" strokeWidth="2" />
          <path d="M9 6Q5 3 3 5t1 4l5 3v7l-4 8q0 3 3 2l4-8M17 6q4-3 6-1t-1 4l-5 3v5" stroke="#262626" strokeWidth="2" />
          <path d="M15 22l5 6L31 17" stroke="#262626" strokeWidth="2" />
        </Icon>
        Accessibility: Good to go
      </button>
      <div className="ml-auto flex h-full items-center">
        <button type="button" aria-label="Normal view" className="flex h-full w-20 items-center justify-center bg-[#e0e0e0]">
          <Icon w={28} h={26}>
            <path d="M1 1h26v24H1zM1 9h26M1 17h26M10 1v24M18 1v24" stroke="#262626" strokeWidth="2" />
          </Icon>
        </button>
        <button type="button" aria-label="Page layout view" className="flex h-full w-20 items-center justify-center">
          <Icon w={28} h={26}>
            <path d="M1 1h26v24H1zM7 5h14v16H7zM10 9h8M10 13h8M10 17h8" stroke="#262626" strokeWidth="2" />
          </Icon>
        </button>
        <button type="button" aria-label="Page break view" className="flex h-full w-20 items-center justify-center">
          <Icon w={28} h={26}>
            <path d="M1 1h26v24H1zM1 15h17M10 1v14M18 1v15" stroke="#262626" strokeWidth="2" />
          </Icon>
        </button>
        <button type="button" aria-label="Zoom out" className="ml-3">
          <Icon w={16} h={16}><path d="M0 7h16" stroke="#262626" strokeWidth="1" /></Icon>
        </button>
        <input
          type="range"
          aria-label="Zoom"
          defaultValue="50"
          className="mr-2.5 ml-3 h-[22px] w-[198px] appearance-none bg-transparent bg-[linear-gradient(#616161,#616161)] bg-[length:100%_2px] bg-center bg-no-repeat [&::-webkit-slider-thumb]:h-[22px] [&::-webkit-slider-thumb]:w-2.5 [&::-webkit-slider-thumb]:appearance-none [&::-webkit-slider-thumb]:bg-[#616161]"
        />
        <button type="button" aria-label="Zoom in">
          <Icon w={16} h={16}><path d="M0 8h16M8 0v16" stroke="#262626" strokeWidth="1" /></Icon>
        </button>
        <button type="button" className="w-[104px] pr-0.5 text-center">100%</button>
      </div>
    </footer>
  );
}

function MessageBox() {
  return (
    <div role="dialog" aria-label="Microsoft Excel" className="absolute top-[491px] left-[865px] w-[618px] overflow-hidden rounded-2xl border-2 border-[#b4b4b4] bg-white shadow-[0_64px_88px_rgba(0,0,0,0.23),0_8px_48px_rgba(0,0,0,0.12)]">
      <div className="flex h-[58px] items-center justify-between pr-[23px] pl-3.5 text-[#9a9a9a]">
        <h2 className="text-[22px]">Microsoft Excel</h2>
        <button type="button" aria-label="Close dialog">
          <Icon w={20} h={20}><path d="M0 0l20 20M20 0L0 20" stroke="#8c8c8c" strokeWidth="2" /></Icon>
        </button>
      </div>
      <p className="px-[22px] pt-[53px] pb-[52px] text-[22px] leading-8 text-black">This code ran in 1.304688 seconds for the year 2018</p>
      <div className="flex justify-end bg-[#efefef] pt-[21px] pr-[41px] pb-[27px]">
        <button type="button" className="h-[53px] w-[161px] rounded-md border border-b-2 border-[#c8c8c8] bg-[#fbfbfb] text-[22px] text-black">OK</button>
      </div>
    </div>
  );
}

export default function App() {
  return (
    <div className="h-screen bg-[#cccccc] pb-0.5 font-['Open_Sans','Noto_Sans',sans-serif]">
      <main className="relative flex h-full flex-col overflow-hidden rounded-[10px] border-y-2 border-[#808080] bg-[#efefef]">
        <TitleBar />
        <TabRow />
        <Ribbon />
        <FormulaBar />
        <Sheet />
        <div className="shrink-0 bg-white">
          <SheetTabs />
          <StatusBar />
        </div>
        <MessageBox />
      </main>
    </div>
  );
}
